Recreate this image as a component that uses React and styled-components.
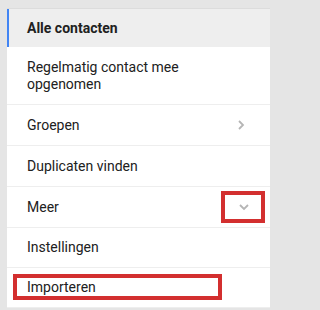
import styled, { createGlobalStyle } from "styled-components";

const GlobalStyle = createGlobalStyle`
    html, body {
        margin: 0;
        padding: 0;
        background: #e5e5e5;
        font-family: Roboto, "Liberation Sans", Arial, sans-serif;
    }
`;

const Page = styled.div`
    padding: 8px 0 0 7px;
    height: 310px;
    box-sizing: border-box;
    overflow: hidden;
`;

const Panel = styled.nav`
    width: 263px;
    background: #ffffff;
    border-top: 1px solid #dcdcdc;
    display: flex;
    flex-direction: column;
`;

const Row = styled.div`
    position: relative;
    display: flex;
    align-items: center;
    justify-content: space-between;
    box-sizing: border-box;
    min-height: ${(p) => p.$h || 41}px;
    padding: 0 24px 0 20px;
    border-bottom: 1px solid #eeeeee;
    font-size: 14px;
    line-height: 17px;
    color: #212121;
`;

const ActiveRow = styled(Row)`
    min-height: 38px;
    background: #eeeeee;
    border-bottom: none;
    border-left: 2px solid #4285f4;
    padding-left: 18px;
    font-weight: 700;
`;

const Label = styled.span`
    max-width: 190px;
`;

// red annotation boxes drawn over the menu
const Highlight = styled.span`
    position: absolute;
    left: ${(p) => p.$x}px;
    top: ${(p) => p.$y}px;
    width: ${(p) => p.$w}px;
    height: ${(p) => p.$hh}px;
    border: 4px solid #d32f2f;
    box-sizing: border-box;
    pointer-events: none;
`;

const Icon = styled.svg`
    margin-right: ${(p) => (p.$down ? -3 : 0)}px;
`;

const Chevron = ({ down }) => (
    <Icon $down={down} width="10" height="10" viewBox="0 0 10 10">
        <path
            d={down ? "M1 3 L5 7 L9 3" : "M3 1 L7 5 L3 9"}
            fill="none"
            stroke="#b5b5b5"
            strokeWidth="1.8"
        />
    </Icon>
);

const App = () => (
    <>
        <GlobalStyle />
        <Page>
            <Panel>
                <ActiveRow>Alle contacten</ActiveRow>
                <Row $h={58}>
                    <Label>Regelmatig contact mee opgenomen</Label>
                </Row>
                <Row>
                    Groepen
                    <Chevron />
                </Row>
                <Row>Duplicaten vinden</Row>
                <Row>
                    Meer
                    <Chevron down />
                    <Highlight $x={214} $y={4} $w={44} $hh={32} />
                </Row>
                <Row $h={39.5}>Instellingen</Row>
                <Row $h={40}>
                    Importeren
                    <Highlight $x={6} $y={6} $w={209} $hh={26} />
                </Row>
            </Panel>
        </Page>
    </>
);

export default App;
